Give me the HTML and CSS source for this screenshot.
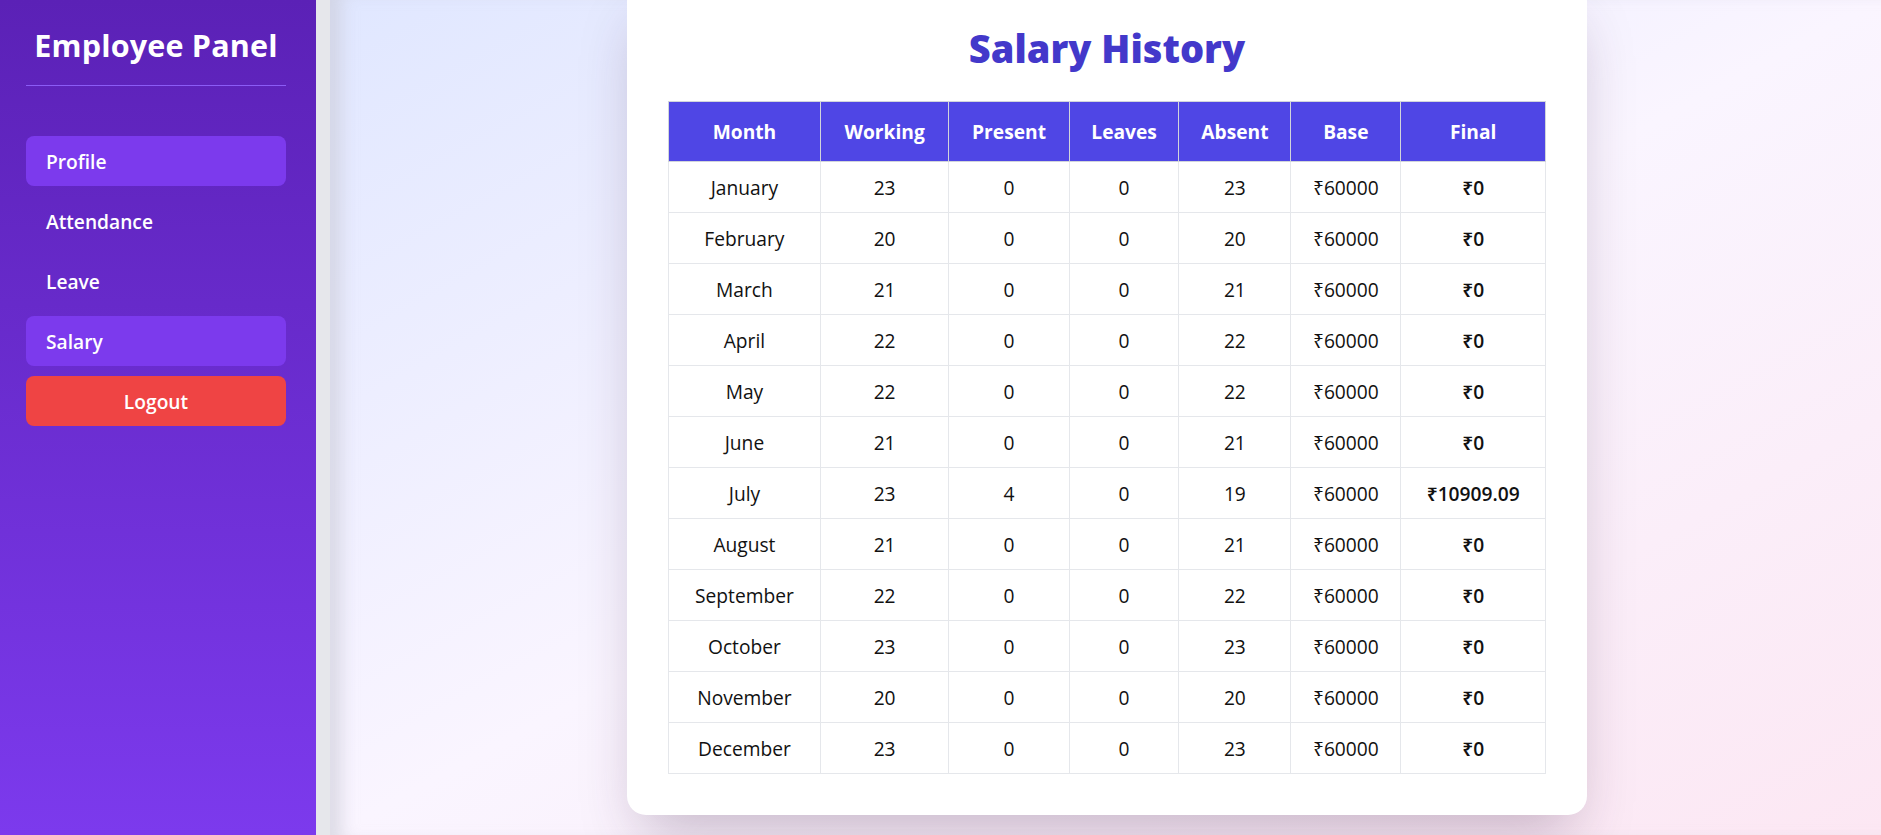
FILE: index.html
```html
<!DOCTYPE html>
<html lang="en">
<head>
<meta charset="utf-8">
<title>Employee Panel - Salary History</title>
<link rel="stylesheet" href="styles.css">
</head>
<body>
<div class="layout">
  <aside class="sidebar">
    <h1 class="brand">Employee Panel</h1>
    <nav class="nav">
      <a class="nav-item active" href="#">Profile</a>
      <a class="nav-item" href="#">Attendance</a>
      <a class="nav-item" href="#">Leave</a>
      <a class="nav-item active" href="#">Salary</a>
      <button class="logout" type="button">Logout</button>
    </nav>
  </aside>
  <main class="main">
    <section class="card">
      <h2 class="card-title">Salary History</h2>
      <table class="salary-table">
        <thead>
          <tr><th>Month</th><th>Working</th><th>Present</th><th>Leaves</th><th>Absent</th><th>Base</th><th>Final</th></tr>
        </thead>
        <tbody>
          <tr><td>January</td><td>23</td><td>0</td><td>0</td><td>23</td><td>₹60000</td><td class="final">₹0</td></tr>
          <tr><td>February</td><td>20</td><td>0</td><td>0</td><td>20</td><td>₹60000</td><td class="final">₹0</td></tr>
          <tr><td>March</td><td>21</td><td>0</td><td>0</td><td>21</td><td>₹60000</td><td class="final">₹0</td></tr>
          <tr><td>April</td><td>22</td><td>0</td><td>0</td><td>22</td><td>₹60000</td><td class="final">₹0</td></tr>
          <tr><td>May</td><td>22</td><td>0</td><td>0</td><td>22</td><td>₹60000</td><td class="final">₹0</td></tr>
          <tr><td>June</td><td>21</td><td>0</td><td>0</td><td>21</td><td>₹60000</td><td class="final">₹0</td></tr>
          <tr><td>July</td><td>23</td><td>4</td><td>0</td><td>19</td><td>₹60000</td><td class="final">₹10909.09</td></tr>
          <tr><td>August</td><td>21</td><td>0</td><td>0</td><td>21</td><td>₹60000</td><td class="final">₹0</td></tr>
          <tr><td>September</td><td>22</td><td>0</td><td>0</td><td>22</td><td>₹60000</td><td class="final">₹0</td></tr>
          <tr><td>October</td><td>23</td><td>0</td><td>0</td><td>23</td><td>₹60000</td><td class="final">₹0</td></tr>
          <tr><td>November</td><td>20</td><td>0</td><td>0</td><td>20</td><td>₹60000</td><td class="final">₹0</td></tr>
          <tr><td>December</td><td>23</td><td>0</td><td>0</td><td>23</td><td>₹60000</td><td class="final">₹0</td></tr>
        </tbody>
      </table>
    </section>
  </main>
</div>
</body>
</html>
```

FILE: styles.css
```css
* { box-sizing: border-box; }

html, body {
  margin: 0;
  padding: 0;
  height: 100%;
}

body {
  font-family: "Open Sans", "Noto Sans", "DejaVu Sans", sans-serif;
  font-size: 19.2px;
  color: #111;
  overflow: hidden;
}

.layout {
  display: flex;
  height: 100vh;
  background: #e6e7eb;
}

.sidebar {
  width: 316px;
  flex: 0 0 316px;
  background: linear-gradient(to bottom, #5b21b6, #7c3aed);
  padding: 27px 30px 0 26px;
  color: #fff;
  position: relative;
  z-index: 1;
}

.brand {
  margin: 0;
  font-size: 30.5px;
  line-height: 36px;
  font-weight: 700;
  text-align: center;
  padding-bottom: 22px;
  border-bottom: 1px solid #8b5cf6;
  letter-spacing: 0.2px;
}

.nav {
  display: flex;
  flex-direction: column;
  gap: 10px;
  margin-top: 50px;
}

.nav-item {
  display: flex;
  align-items: center;
  height: 50px;
  padding: 0 20px;
  border-radius: 8px;
  color: #fff;
  text-decoration: none;
  font-weight: 600;
  font-size: 19.2px;
}

.nav-item.active {
  background: #7c3aed;
}

.logout {
  height: 50px;
  border: 0;
  border-radius: 8px;
  background: #ef4444;
  color: #fff;
  font-family: inherit;
  font-size: 19.2px;
  font-weight: 600;
}

.main {
  flex: 1;
  margin-left: 14px;
  display: flex;
  flex-direction: column;
  justify-content: flex-end;
  align-items: center;
  padding: 0 0 20px 3px;
  background: linear-gradient(to bottom right, #e0e7ff, #faf5ff 50%, #fce7f3);
  box-shadow: inset 20px 0 16px -8px rgba(200, 200, 212, 0.55);
  overflow: hidden;
}

.card {
  width: 960px;
  flex: none;
  background: #fff;
  border-radius: 19px;
  padding: 41px;
  box-shadow: 0 30px 60px -14px rgba(60, 30, 70, 0.28);
}

.card-title {
  margin: 0 0 29px;
  text-align: center;
  color: #4338ca;
  font-size: 38px;
  line-height: 48px;
  font-weight: 800;
}

.salary-table {
  width: 100%;
  border-collapse: collapse;
  border: 1px solid #e5e7eb;
  text-align: center;
}

.salary-table th {
  background: #4f46e5;
  color: #fff;
  font-weight: 700;
  height: 60px;
  padding: 0 10px;
  border: 1px solid #d1d5db;
}

.salary-table td {
  height: 51px;
  padding: 0 10px;
  border: 1px solid #e5e7eb;
  font-weight: 400;
}

.salary-table td.final {
  font-weight: 600;
}
```
